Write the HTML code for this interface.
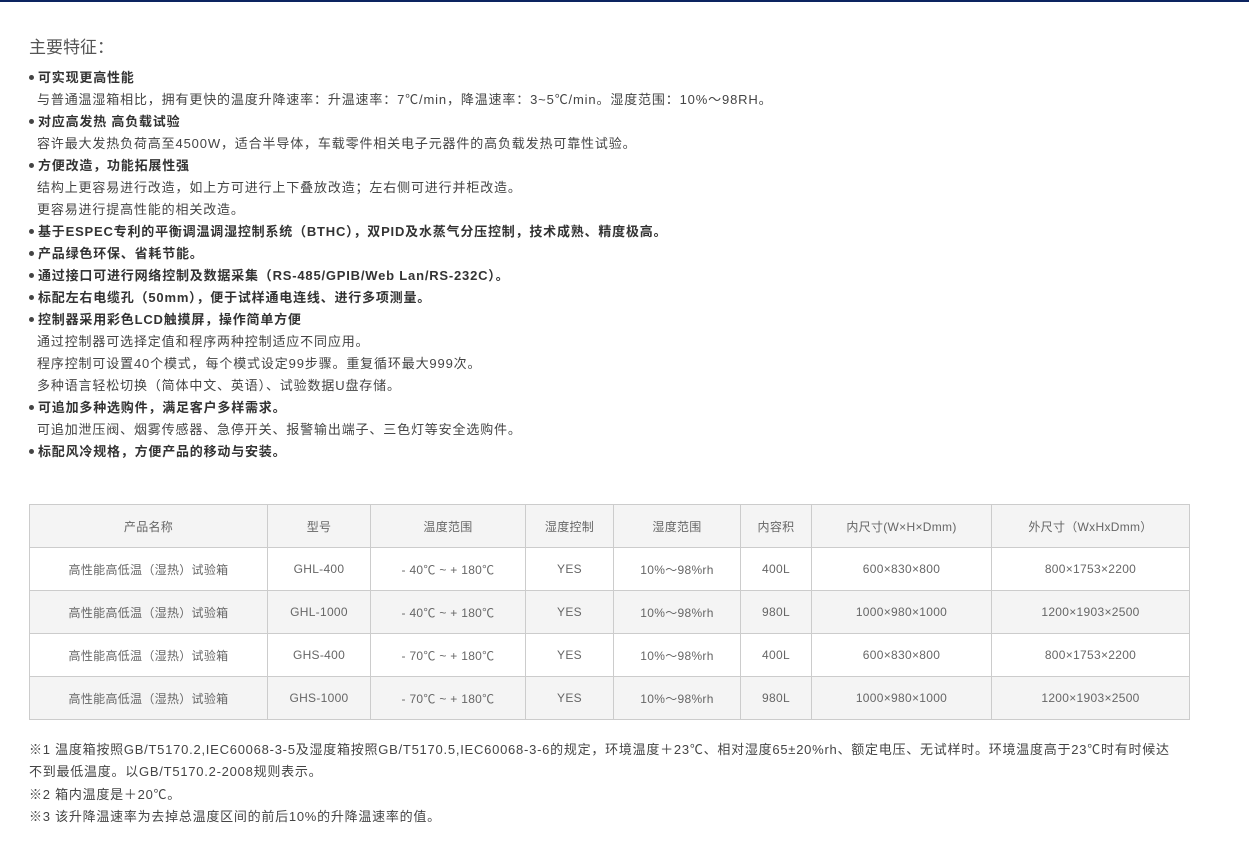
<!DOCTYPE html><html><head><meta charset="utf-8"><style>
body{margin:0;background:#fff;font-family:"Liberation Sans","Noto Sans CJK SC",sans-serif;color:#333;width:1249px;height:851px;overflow:hidden;position:relative}
.bar{position:absolute;left:0;top:0;width:1249px;height:2px;background:#0c2460}
h2{position:absolute;left:29px;top:33px;margin:0;font-weight:normal;font-size:17px;color:#555}
.f{position:absolute;left:29px;top:67px;font-size:13px;line-height:22px;letter-spacing:0.85px}
.f b{display:block;font-weight:bold;letter-spacing:0.8px}
.f b:before{content:"";display:inline-block;width:5px;height:5px;border-radius:50%;background:#444;margin:0 4px 2px 0;vertical-align:middle}
.f span{display:block;padding-left:8px;color:#444}
table{position:absolute;left:29px;top:504px;border-collapse:collapse;font-size:12px;color:#666;letter-spacing:0.3px}
td{border:1px solid #ccc;height:42px;text-align:center;padding:0}
tr:nth-child(odd) td{background:#f4f4f4}
.n{position:absolute;left:29px;top:739px;font-size:13px;line-height:22.3px;color:#444;white-space:nowrap;letter-spacing:0.75px}
</style></head><body>
<div class="bar"></div>
<h2>主要特征：</h2>
<div class="f">
<b>可实现更高性能</b>
<span>与普通温湿箱相比，拥有更快的温度升降速率：升温速率：7℃/min，降温速率：3~5℃/min。湿度范围：10%～98RH。</span>
<b>对应高发热 高负载试验</b>
<span>容许最大发热负荷高至4500W，适合半导体，车载零件相关电子元器件的高负载发热可靠性试验。</span>
<b>方便改造，功能拓展性强</b>
<span>结构上更容易进行改造，如上方可进行上下叠放改造；左右侧可进行并柜改造。</span>
<span>更容易进行提高性能的相关改造。</span>
<b>基于ESPEC专利的平衡调温调湿控制系统（BTHC），双PID及水蒸气分压控制，技术成熟、精度极高。</b>
<b>产品绿色环保、省耗节能。</b>
<b>通过接口可进行网络控制及数据采集（RS-485/GPIB/Web Lan/RS-232C）。</b>
<b>标配左右电缆孔（50mm），便于试样通电连线、进行多项测量。</b>
<b>控制器采用彩色LCD触摸屏，操作简单方便</b>
<span>通过控制器可选择定值和程序两种控制适应不同应用。</span>
<span>程序控制可设置40个模式，每个模式设定99步骤。重复循环最大999次。</span>
<span>多种语言轻松切换（简体中文、英语）、试验数据U盘存储。</span>
<b>可追加多种选购件，满足客户多样需求。</b>
<span>可追加泄压阀、烟雾传感器、急停开关、报警输出端子、三色灯等安全选购件。</span>
<b>标配风冷规格，方便产品的移动与安装。</b>
</div>
<table>
<colgroup><col style="width:238px"><col style="width:103px"><col style="width:155px"><col style="width:88px"><col style="width:127px"><col style="width:71px"><col style="width:180px"><col style="width:198px"></colgroup>
<tr><td>产品名称</td><td>型号</td><td>温度范围</td><td>湿度控制</td><td>湿度范围</td><td>内容积</td><td>内尺寸(W×H×Dmm)</td><td>外尺寸（WxHxDmm）</td></tr>
<tr><td>高性能高低温（湿热）试验箱</td><td>GHL-400</td><td>- 40℃ ~ + 180℃</td><td>YES</td><td>10%～98%rh</td><td>400L</td><td>600×830×800</td><td>800×1753×2200</td></tr>
<tr><td>高性能高低温（湿热）试验箱</td><td>GHL-1000</td><td>- 40℃ ~ + 180℃</td><td>YES</td><td>10%～98%rh</td><td>980L</td><td>1000×980×1000</td><td>1200×1903×2500</td></tr>
<tr><td>高性能高低温（湿热）试验箱</td><td>GHS-400</td><td>- 70℃ ~ + 180℃</td><td>YES</td><td>10%～98%rh</td><td>400L</td><td>600×830×800</td><td>800×1753×2200</td></tr>
<tr><td>高性能高低温（湿热）试验箱</td><td>GHS-1000</td><td>- 70℃ ~ + 180℃</td><td>YES</td><td>10%～98%rh</td><td>980L</td><td>1000×980×1000</td><td>1200×1903×2500</td></tr>
</table>
<div class="n">※1 温度箱按照GB/T5170.2,IEC60068-3-5及湿度箱按照GB/T5170.5,IEC60068-3-6的规定，环境温度＋23℃、相对湿度65±20%rh、额定电压、无试样时。环境温度高于23℃时有时候达<br>不到最低温度。以GB/T5170.2-2008规则表示。<br>※2 箱内温度是＋20℃。<br>※3 该升降温速率为去掉总温度区间的前后10%的升降温速率的值。</div>
</body></html>
